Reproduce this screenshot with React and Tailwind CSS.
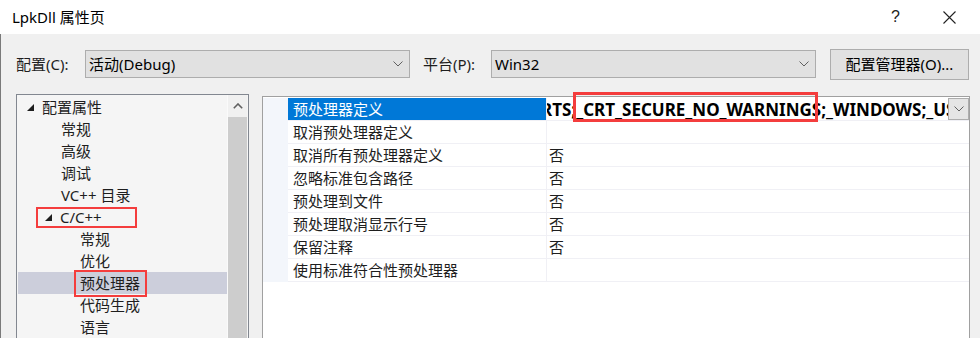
import React from "react";

const F = { fontFamily: '"Noto Sans", "Noto Sans CJK SC", sans-serif' };

function Chevron({ className = "" }) {
  return (
    <svg width="10" height="6" viewBox="0 0 10 6" className={className}>
      <path d="M0.5 0.5 L5 5 L9.5 0.5" fill="none" stroke="#606060" strokeWidth="1" />
    </svg>
  );
}

function Tri() {
  return (
    <svg width="7" height="7" viewBox="0 0 7 7" className="shrink-0">
      <polygon points="7,0 7,7 0,7" fill="#1e1e1e" />
    </svg>
  );
}

function Combo({ text, w }) {
  return (
    <div className={`h-[28px] ${w} shrink-0 bg-[#e1e1e1] border border-[#adadad] flex items-center justify-between pl-[3px] pr-[6px]`}>
      <span className="text-[15px] leading-none text-black">{text}</span>
      <Chevron />
    </div>
  );
}

const treeItems = ["常规", "高级", "调试", "VC++ 目录"];
const sub = ["常规", "优化"];
const sub2 = ["代码生成", "语言"];

const props = [
  ["取消预处理器定义", ""],
  ["取消所有预处理器定义", "否"],
  ["忽略标准包含路径", "否"],
  ["预处理到文件", "否"],
  ["预处理取消显示行号", "否"],
  ["保留注释", "否"],
  ["使用标准符合性预处理器", ""],
];

export default function App() {
  return (
    <div style={F} className="w-[980px] h-[338px] overflow-hidden bg-[#f0f0f0] text-[#1e1e1e] flex flex-col">
      {/* title bar */}
      <div className="h-[34px] bg-white flex items-center shrink-0">
        <span className="ml-[12px] text-[15px] leading-none text-black">LpkDll 属性页</span>
        <span className="ml-auto mr-[43px] text-[16px] leading-none text-[#222]" style={{ fontFamily: '"Liberation Sans", sans-serif' }}>?</span>
        <svg width="13" height="13" viewBox="0 0 13 13" className="mr-[24px]">
          <path d="M0.5 0.5 L12.5 12.5 M12.5 0.5 L0.5 12.5" stroke="#222" strokeWidth="1.1" />
        </svg>
      </div>

      <div className="flex-1 flex flex-col border-l border-[#7a7a7a] min-h-0">
        {/* config row */}
        <div className="h-[60px] shrink-0 flex items-center pl-[15px]">
          <span className="text-[15px] leading-none w-[69px] shrink-0">配置(C):</span>
          <Combo text="活动(Debug)" w="w-[325px]" />
          <span className="text-[15px] leading-none ml-[13px] w-[68px] shrink-0">平台(P):</span>
          <Combo text="Win32" w="w-[325px]" />
          <div className="ml-[14px] w-[139px] h-[31px] shrink-0 bg-[#e1e1e1] border border-[#adadad] flex items-center justify-center">
            <span className="text-[15px] leading-none text-black">配置管理器(O)...</span>
          </div>
        </div>

        {/* main */}
        <div className="flex-1 flex pl-[15px] min-h-0">
          {/* tree */}
          <div className="w-[233px] shrink-0 border-l border-t border-r border-[#828790] bg-[#f5f5f5] flex">
            <div className="flex-1 pt-[1px] pl-[1px] flex flex-col text-[15px]">
              <div className="h-[22px] flex items-center pl-[9px] gap-[8px]">
                <Tri />
                <span className="leading-none">配置属性</span>
              </div>
              {treeItems.map((t) => (
                <div key={t} className="h-[22px] flex items-center pl-[43px]">
                  <span className="leading-none">{t}</span>
                </div>
              ))}
              <div className="h-[22px] flex items-center pl-[18px]">
                <div className="w-[101px] h-[21px] border-2 border-[#f43d3d] flex items-center pl-[7px] gap-[8px]">
                  <Tri />
                  <span className="leading-none">C/C++</span>
                </div>
              </div>
              {sub.map((t) => (
                <div key={t} className="h-[22px] flex items-center pl-[62px]">
                  <span className="leading-none">{t}</span>
                </div>
              ))}
              <div className="h-[22px] flex items-center bg-[#cccedb] pl-[56px]">
                <div className="w-[73px] h-[27px] shrink-0 border-2 border-[#f43d3d] flex items-center pl-[4px]">
                  <span className="leading-none">预处理器</span>
                </div>
              </div>
              {sub2.map((t) => (
                <div key={t} className="h-[22px] flex items-center pl-[62px]">
                  <span className="leading-none">{t}</span>
                </div>
              ))}
            </div>
            {/* scrollbar */}
            <div className="w-[20px] mr-[1px] border-l border-[#fafafa] flex flex-col">
              <div className="h-[22px] bg-[#f0f0f0] flex items-center justify-center">
                <svg width="10" height="6" viewBox="0 0 10 6">
                  <path d="M0.8 5.2 L5 1 L9.2 5.2" fill="none" stroke="#606060" strokeWidth="1.6" />
                </svg>
              </div>
              <div className="flex-1 bg-[#cdcdcd]" />
            </div>
          </div>

          {/* property grid */}
          <div className="ml-[13px] mt-[2px] w-[708px] shrink-0 border-l border-t border-r border-[#a0a0a0] bg-white flex flex-col pt-[1px]">
            <div className="flex">
              <div className="w-[25px] shrink-0 bg-[#f3f6fb]" />
              <div className="flex-1 min-w-0 flex flex-col text-[15px]">
                {/* first row */}
                <div className="h-[23px] flex border-b border-[#f0f0f5]">
                  <div className="w-[258px] shrink-0 bg-[#0078d7] text-white flex items-center pl-[5px]">
                    <span className="leading-none">预处理器定义</span>
                  </div>
                  <div className="flex-1 min-w-0 relative flex items-center border-l border-[#f0f0f5]">
                    <div className="flex-1 min-w-0 overflow-hidden whitespace-nowrap pl-[2px] h-full flex items-center">
                      <span className="leading-none font-bold text-[17px] text-black ml-[-8px]">RTS;_CRT_SECURE_NO_WARNINGS;_WINDOWS;_USRDLL</span>
                    </div>
                    <div className="w-[21px] h-[22px] shrink-0 bg-[#e5e5e5] border border-[#adadad] flex items-center justify-center">
                      <Chevron />
                    </div>
                    <div className="absolute left-[26px] top-[-6px] w-[245px] h-[30px] border-[3px] border-[#f43d3d]" />
                  </div>
                </div>
                {props.map(([k, v]) => (
                  <div key={k} className="h-[23px] flex border-b border-[#f0f0f5]">
                    <div className="w-[258px] shrink-0 flex items-center pl-[5px]">
                      <span className="leading-none">{k}</span>
                    </div>
                    <div className="flex-1 min-w-0 flex items-center pl-[2px] border-l border-[#f0f0f5]">
                      <span className="leading-none">{v}</span>
                    </div>
                  </div>
                ))}
              </div>
            </div>
            <div className="flex-1" />
          </div>
        </div>
      </div>
    </div>
  );
}
